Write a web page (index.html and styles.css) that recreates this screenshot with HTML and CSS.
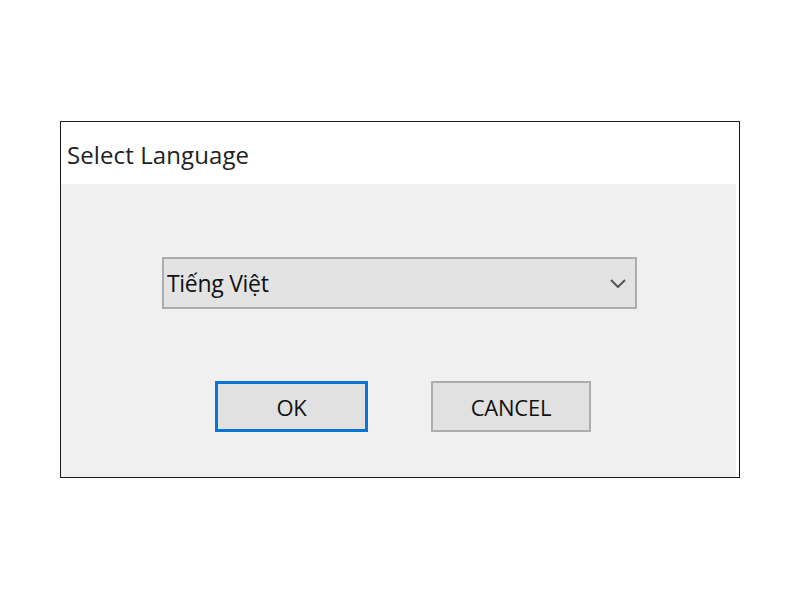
FILE: index.html
```html
<!DOCTYPE html>
<html lang="vi">
<head>
<meta charset="utf-8">
<title>Select Language</title>
<link rel="stylesheet" href="styles.css">
</head>
<body>
<div class="page">
  <div class="dialog">
    <div class="dialog-header">
      <span class="dialog-title">Select Language</span>
    </div>
    <div class="dialog-body">
      <div class="select">
        <span class="select-value">Tiếng Việt</span>
        <svg class="chevron" width="16" height="9" viewBox="0 0 16 9" aria-hidden="true">
          <path d="M1 1 L8 8 L15 1" fill="none" stroke="#555" stroke-width="2"/>
        </svg>
      </div>
      <div class="buttons">
        <button class="btn btn-focused">OK</button>
        <button class="btn">CANCEL</button>
      </div>
    </div>
  </div>
</div>
</body>
</html>
```

FILE: styles.css
```css
html, body {
  margin: 0;
  padding: 0;
  background: #ffffff;
}

.page {
  padding: 121px 0 0 60px;
}

.dialog {
  width: 678px;
  height: 355px;
  border: 1px solid #1a1a1a;
  background: #ffffff;
  display: flex;
  flex-direction: column;
  font-family: "Open Sans", "Noto Sans", "Liberation Sans", sans-serif;
  color: #1a1a1a;
}

.dialog-header {
  height: 62px;
  display: flex;
  align-items: center;
  padding-left: 6px;
}

.dialog-title {
  font-size: 24px;
  letter-spacing: 0.1px;
  color: #222;
  margin-top: 2px;
}

.dialog-body {
  flex: 1;
  background: #f0f0f0;
  margin-right: 3px;
  padding: 73px 0 0 101px;
}

.select {
  box-sizing: border-box;
  width: 475px;
  height: 52px;
  border: 2px solid #adadad;
  background: #e3e3e3;
  display: flex;
  align-items: center;
  justify-content: space-between;
  padding: 0 9px 0 3px;
}

.select-value {
  font-size: 23px;
  letter-spacing: -0.3px;
  color: #111;
  font-weight: 500;
}

.chevron {
  display: block;
}

.buttons {
  display: flex;
  gap: 63px;
  margin-top: 72px;
  padding-left: 53px;
}

.btn {
  box-sizing: border-box;
  width: 160px;
  height: 51px;
  border: 2px solid #adadad;
  background: #e1e1e1;
  font-family: "Open Sans", "Noto Sans", "Liberation Sans", sans-serif;
  font-size: 22px;
  letter-spacing: -0.2px;
  color: #111;
  padding: 0;
  margin: 0;
}

.btn-focused {
  width: 153px;
  border: 3px solid #0a74d4;
}
```
